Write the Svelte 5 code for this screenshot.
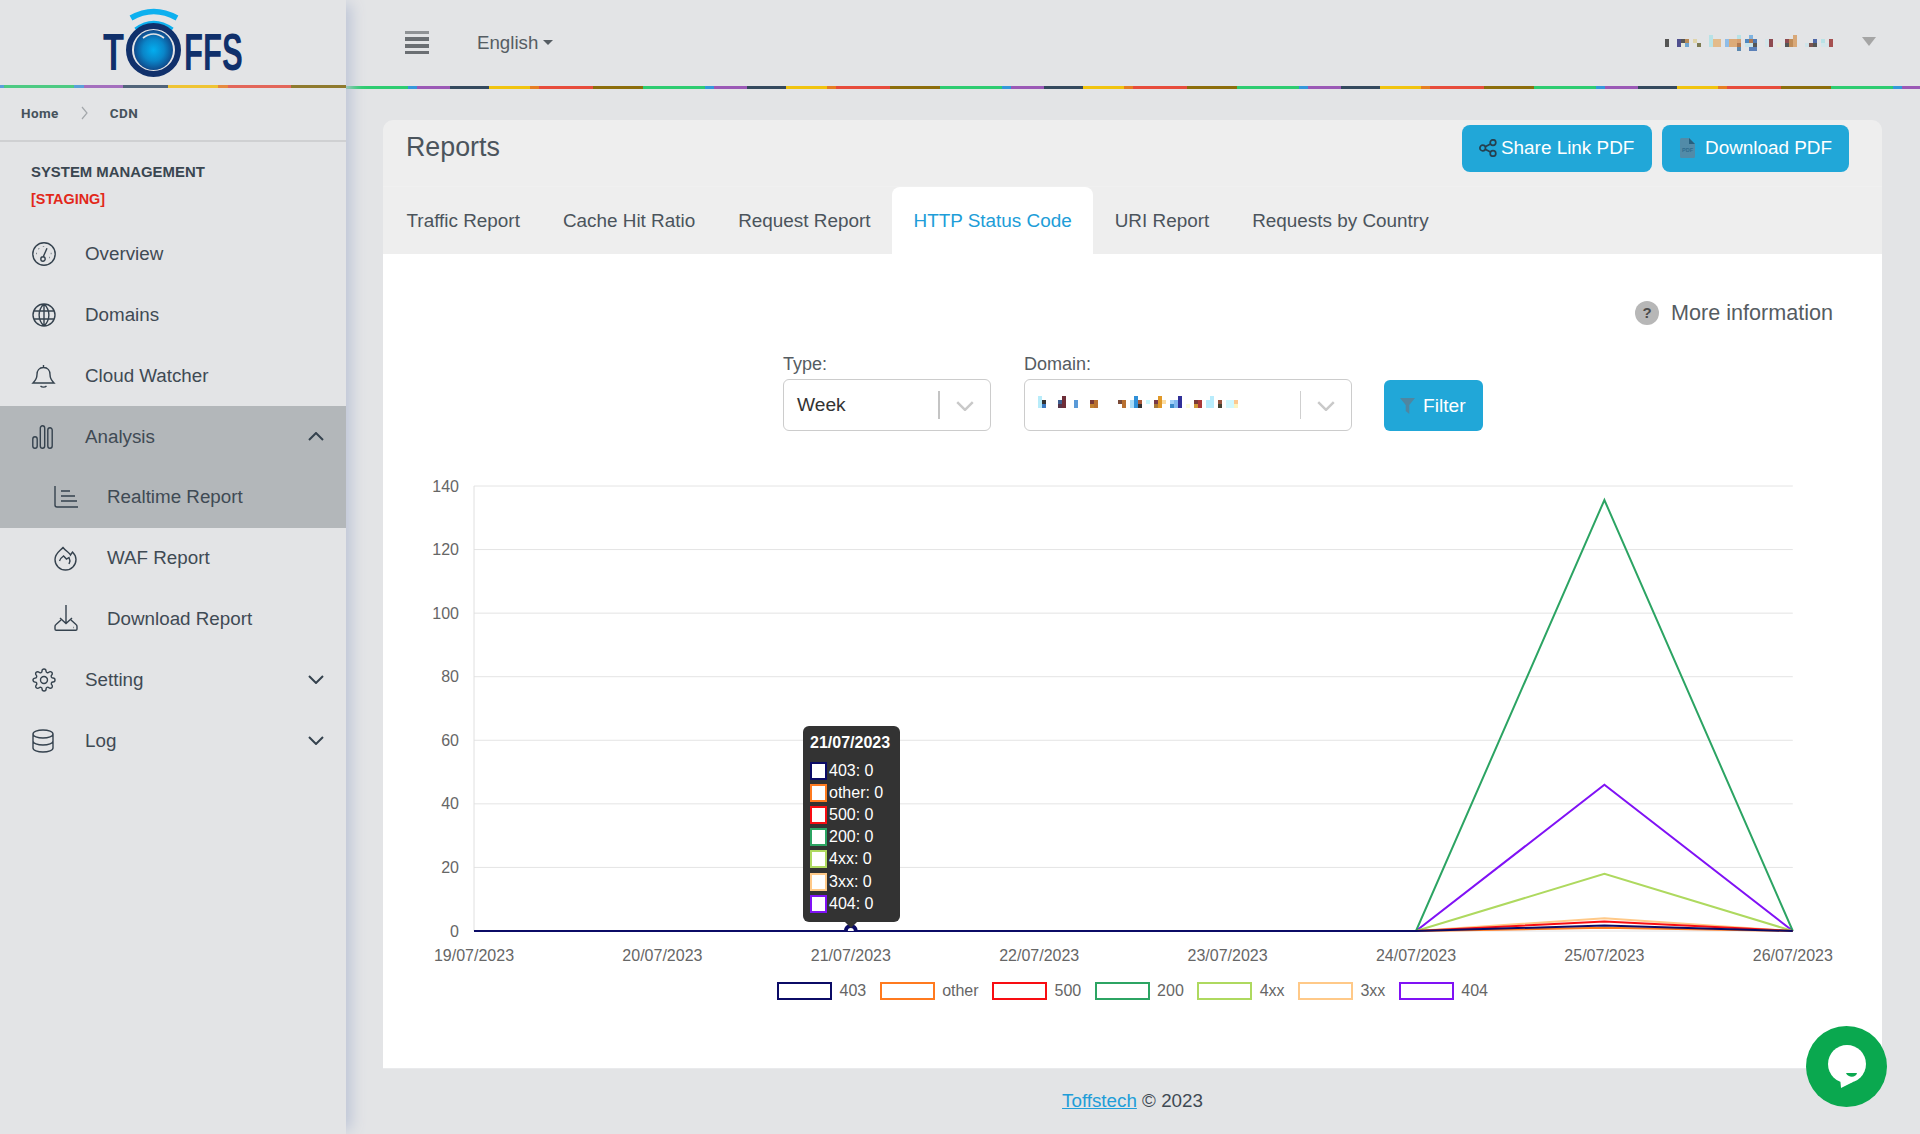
<script>
	const icons = {
		overview:
			'M12 .8a11.2 11.2 0 1 0 0 22.4 11.2 11.2 0 0 0 0-22.4z M11 15.3 15 6.3 M13.2 17a2.2 2.2 0 1 1-4.4 0 2.2 2.2 0 0 1 4.4 0z M11.5 4.4v.6 M6.6 6.6l.4.4 M4.3 11.5h.6 M18.8 11.5h.6 M17.2 15.5h.5',
		domains:
			'M12 1a11 11 0 1 0 0 22 11 11 0 0 0 0-22z M12 1c-6.5 6-6.5 16 0 22 M12 1c6.5 6 6.5 16 0 22 M12 1v22 M2 8h20 M2 16h20',
		bell: 'M11.5 1v2.5 M11.5 3.5c-4.5 0-6.5 3.5-6.5 7 0 4.5-2 6.5-4 8.5h21c-2-2-4-4-4-8.5 0-3.5-2-7-6.5-7z M8.5 22c1.5 1.5 4.5 1.5 6 0',
		analysis:
			'M.8 14a2.2 2.2 0 0 1 4.4 0v7a2.2 2.2 0 0 1-4.4 0z M8.3 3a2.2 2.2 0 0 1 4.4 0v18a2.2 2.2 0 0 1-4.4 0z M15.8 5a2.2 2.2 0 0 1 4.4 0v16a2.2 2.2 0 0 1-4.4 0z',
		realtime: 'M1 1v19a2 2 0 0 0 2 2h21 M7 6h9 M7 11h14 M7 16h16',
		waf: 'M9 1.5C6 5 1 7.5 1 13.5a10.5 10.5 0 0 0 21 0c0-3-1.5-5.5-3.5-7.5l-2 3C15.5 6.500 12 5.500 9 1.5z M5.5 15c1-2.5 2.5-4 4-5l3 3 2.5-1.5 1 3.5-1 3',
		download:
			'M12 -2v18 M6 11l6 5.5 6-5.5 M7 13l-5 4.5c-.8.6-1 1.2-1 2v2.5a1.2 1.2 0 0 0 1.2 1.2h19.6a1.2 1.2 0 0 0 1.2-1.2v-2.5c0-.8-.2-1.4-1-2L17 13 M19 20.5h.5',
		setting:
			'M19.4 15a1.65 1.65 0 0 0 .33 1.82l.06.06a2 2 0 0 1 0 2.83 2 2 0 0 1-2.83 0l-.06-.06a1.65 1.65 0 0 0-1.82-.33 1.65 1.65 0 0 0-1 1.51V21a2 2 0 0 1-2 2 2 2 0 0 1-2-2v-.09A1.65 1.65 0 0 0 9 19.4a1.65 1.65 0 0 0-1.82.33l-.06.06a2 2 0 0 1-2.83 0 2 2 0 0 1 0-2.83l.06-.06a1.65 1.65 0 0 0 .33-1.82 1.65 1.65 0 0 0-1.51-1H3a2 2 0 0 1-2-2 2 2 0 0 1 2-2h.09A1.65 1.65 0 0 0 4.6 9a1.65 1.65 0 0 0-.33-1.82l-.06-.06a2 2 0 0 1 0-2.83 2 2 0 0 1 2.83 0l.06.06a1.65 1.65 0 0 0 1.82.33H9a1.65 1.65 0 0 0 1-1.51V3a2 2 0 0 1 2-2 2 2 0 0 1 2 2v.09a1.65 1.65 0 0 0 1 1.51 1.65 1.65 0 0 0 1.82-.33l.06-.06a2 2 0 0 1 2.83 0 2 2 0 0 1 0 2.83l-.06.06a1.65 1.65 0 0 0-.33 1.82V9a1.65 1.65 0 0 0 1.51 1H21a2 2 0 0 1 2 2 2 2 0 0 1-2 2h-.09a1.65 1.65 0 0 0-1.51 1z M15.5 12a3.5 3.5 0 1 1-7 0 3.5 3.5 0 0 1 7 0z',
		log: 'M1 5c0-2.2 4.5-4 10-4s10 1.8 10 4-4.5 4-10 4S1 7.2 1 5z M1 5v14c0 2.2 4.5 4 10 4s10-1.8 10-4V5 M1 12c0 2.2 4.5 4 10 4s10-1.8 10-4'
	};

	const nav = [
		{ label: 'Overview', icon: 'overview' },
		{ label: 'Domains', icon: 'domains' },
		{ label: 'Cloud Watcher', icon: 'bell' },
		{ label: 'Analysis', icon: 'analysis', active: true, chevron: 'up' },
		{ label: 'Realtime Report', icon: 'realtime', active: true, sub: true },
		{ label: 'WAF Report', icon: 'waf', sub: true },
		{ label: 'Download Report', icon: 'download', sub: true },
		{ label: 'Setting', icon: 'setting', chevron: 'down' },
		{ label: 'Log', icon: 'log', chevron: 'down' }
	];

	const tabs = [
		'Traffic Report',
		'Cache Hit Ratio',
		'Request Report',
		'HTTP Status Code',
		'URI Report',
		'Requests by Country'
	];

	// blurred-out text, cells in 1/3 px
	const userCells = [
		[15, 33, 12, 24, '#555'], [51, 33, 12, 24, '#4f4f8f'], [63, 33, 12, 12, '#555'], [75, 33, 12, 12, '#b98b55'],
		[75, 45, 12, 12, '#6fa5d0'], [63, 45, 12, 12, '#e8e8d8'], [99, 33, 12, 12, '#e0d4a8'], [111, 45, 12, 12, '#7d7a52'],
		[147, 21, 12, 36, '#b8e2e6'], [159, 33, 24, 24, '#e3bb8b'], [195, 33, 12, 24, '#8fbde8'], [207, 33, 24, 24, '#dcab78'],
		[231, 21, 12, 12, '#b8e2e6'], [231, 33, 12, 12, '#d8a070'], [231, 45, 12, 12, '#b07a50'], [231, 57, 12, 12, '#5b88b0'],
		[267, 21, 12, 12, '#7fb3e0'], [255, 33, 12, 12, '#4f88c0'], [267, 33, 12, 12, '#b07850'], [279, 33, 12, 12, '#4f78b0'],
		[255, 45, 24, 12, '#c8e4ec'], [279, 45, 12, 12, '#555'], [267, 57, 24, 12, '#5b80b8'], [315, 33, 12, 24, '#d4e6ea'],
		[327, 33, 12, 24, '#8e4a50'], [351, 45, 12, 12, '#e8e8d8'], [375, 33, 12, 12, '#8e4a50'], [375, 45, 12, 12, '#555'],
		[387, 33, 12, 24, '#c08c58'], [399, 21, 12, 36, '#d8a878'], [435, 45, 12, 12, '#cfe4ea'], [447, 45, 12, 12, '#7d5550'],
		[459, 33, 12, 12, '#4f68a8'], [459, 45, 12, 12, '#555'], [483, 33, 12, 12, '#b8e2e6'], [483, 45, 24, 12, '#d4e6ea'],
		[507, 33, 12, 24, '#a65050']
	];

	const domainCells = [
		[24, 18, 12, 36, '#b8ecfa'], [36, 30, 12, 12, '#333'], [36, 42, 12, 12, '#3a78c0'], [84, 30, 12, 12, '#3f5f90'],
		[84, 42, 12, 12, '#55344a'], [96, 18, 12, 36, '#6e2e38'], [132, 30, 12, 24, '#5a9ad8'], [180, 30, 12, 12, '#7a3a38'],
		[180, 42, 12, 12, '#c08030'], [192, 30, 12, 24, '#b87030'], [264, 30, 12, 12, '#7a4a38'], [276, 30, 12, 24, '#b87030'],
		[300, 30, 12, 24, '#a8dcf8'], [312, 18, 12, 36, '#3090d8'], [324, 30, 12, 12, '#a85838'], [324, 42, 12, 12, '#333'],
		[348, 30, 12, 12, '#c8f8ff'], [372, 30, 12, 12, '#7a3a48'], [372, 42, 12, 12, '#a87838'], [384, 18, 12, 36, '#e09828'],
		[396, 30, 12, 12, '#fcdca0'], [420, 30, 12, 12, '#a0d0f8'], [420, 42, 12, 12, '#3888c8'], [432, 30, 12, 24, '#80b8f0'],
		[444, 18, 12, 36, '#303098'], [468, 42, 12, 12, '#fcfcd8'], [492, 30, 12, 12, '#7a3a38'], [492, 42, 12, 12, '#d09838'],
		[504, 30, 12, 24, '#a83838'], [528, 30, 12, 24, '#b8ecfc'], [540, 18, 12, 36, '#b8ecfc'], [564, 30, 12, 12, '#955540'],
		[564, 42, 12, 12, '#443'], [588, 30, 24, 24, '#d0f8ff'], [612, 30, 12, 12, '#fcc890'], [612, 42, 12, 12, '#fcf4c0']
	];

	const dates = ['19/07/2023', '20/07/2023', '21/07/2023', '22/07/2023', '23/07/2023', '24/07/2023', '25/07/2023', '26/07/2023'];
	const yTicks = [0, 20, 40, 60, 80, 100, 120, 140];
	const series = [
		{ name: '403', color: '#0b0b66', peak: 1.7 },
		{ name: 'other', color: '#ff7a1f', peak: 1 },
		{ name: '500', color: '#f80d12', peak: 3 },
		{ name: '200', color: '#2ca463', peak: 135.6 },
		{ name: '4xx', color: '#aed95f', peak: 18 },
		{ name: '3xx', color: '#ffc988', peak: 4 },
		{ name: '404', color: '#8012f5', peak: 46 }
	];

	const x0 = 474;
	const xStep = 188.4;
	const xAt = (i) => x0 + i * xStep;
	const yAt = (v) => 931 - v * (445 / 140);
	const linePoints = (s) =>
		dates.map((_, i) => `${xAt(i)},${yAt(i === 6 ? s.peak : 0)}`).join(' ');
	const drawOrder = [...series].reverse();
</script>

{#snippet pixels(cells)}
	<svg class="pixels" viewBox="0 0 660 90" shape-rendering="crispEdges">
		{#each cells as c}
			<rect x={c[0]} y={c[1]} width={c[2]} height={c[3]} fill={c[4]} />
		{/each}
	</svg>
{/snippet}

<div class="page">
	<aside class="sidebar">
		<div class="logo-box">
			<svg class="logo" viewBox="80 0 190 85">
				<defs>
					<radialGradient id="lens" cx="50%" cy="50%" r="50%">
						<stop offset="0%" stop-color="#03aeef" />
						<stop offset="55%" stop-color="#0a86c9" />
						<stop offset="100%" stop-color="#0f4a8c" />
					</radialGradient>
				</defs>
				<text transform="translate(103 70) scale(0.66 1)" class="logo-text">T</text>
				<text transform="translate(184 70) scale(0.6 1)" class="logo-text">FFS</text>
				<path d="M131 18 Q153.5 5 177 18" fill="none" stroke="#0db0ef" stroke-width="5.5" />
				<path d="M136 30 Q153.5 17 172 30" fill="none" stroke="#0db0ef" stroke-width="5.5" />
				<ellipse cx="153.5" cy="50" rx="24.5" ry="24" fill="#e3e4e6" stroke="#10306b" stroke-width="6" />
				<ellipse cx="153.5" cy="50" rx="19.5" ry="20" fill="url(#lens)" />
				<path d="M143 38 Q153.5 30 164 38" fill="none" stroke="#e3e4e6" stroke-width="1.6" />
			</svg>
		</div>
		<div class="rainbow-side"></div>

		<nav class="breadcrumb">
			<span>Home</span>
			<svg width="7" height="14" viewBox="0 0 7 14"><path d="M1 1l5 6-5 6" fill="none" stroke="#a3a7ab" stroke-width="1.2" /></svg>
			<span>CDN</span>
		</nav>

		<div class="heading">
			<div class="system">SYSTEM MANAGEMENT</div>
			<div class="staging">[STAGING]</div>
		</div>

		<ul class="menu">
			{#each nav as item}
				<li class:active={item.active} class:sub={item.sub}>
					<svg class="icon" viewBox="0 0 24 24"><path d={icons[item.icon]} /></svg>
					<span class="label">{item.label}</span>
					{#if item.chevron}
						<svg class="chevron" viewBox="0 0 16 9">
							<path d={item.chevron === 'up' ? 'M1 8l7-7 7 7' : 'M1 1l7 7 7-7'} />
						</svg>
					{/if}
				</li>
			{/each}
		</ul>
	</aside>

	<div class="right">
		<header class="topbar">
			<div class="burger"><i></i><i></i><i></i><i></i></div>
			<div class="lang">English<b class="caret"></b></div>
			<div class="user">
				{@render pixels(userCells)}
			</div>
		</header>
		<div class="rainbow"></div>

		<main class="content">
			<section class="card">
				<div class="card-top">
					<h1>Reports</h1>
					<div class="actions">
						<button class="btn share">
							<svg width="18" height="18" viewBox="0 0 18 18" fill="none" stroke="#26404f" stroke-width="1.7">
								<circle cx="3.7" cy="9" r="2.8" /><circle cx="14" cy="3.6" r="2.8" /><circle cx="14" cy="14.4" r="2.8" />
								<path d="M6.2 7.7l5.3-2.8M6.2 10.3l5.3 2.8" />
							</svg>
							Share Link PDF
						</button>
						<button class="btn download">
							<svg width="15" height="20" viewBox="0 0 15 20">
								<path d="M0 1.5A1.5 1.5 0 0 1 1.5 0H9l6 6v12.5a1.5 1.5 0 0 1-1.5 1.5h-12A1.5 1.5 0 0 1 0 18.500z" fill="#528ba8" />
								<path d="M9 0l6 6H9z" fill="#26607f" />
								<text x="7.500" y="14" class="pdf-mark">PDF</text>
							</svg>
							Download PDF
						</button>
					</div>
				</div>
				<div class="tabs">
					{#each tabs as tab, i}
						<div class="tab" class:current={i === 3}>{tab}</div>
					{/each}
				</div>

				<div class="card-body">
					<div class="more">
						<span class="help">?</span>
						<span>More information</span>
					</div>

					<div class="filters">
						<div class="field type">
							<span class="field-label">Type:</span>
							<div class="select">
								<span class="value">Week</span>
								<i class="sep dark"></i>
								<svg class="arrow" viewBox="0 0 16 9"><path d="M1 1l7 7 7-7" /></svg>
							</div>
						</div>
						<div class="field domain">
							<span class="field-label">Domain:</span>
							<div class="select">
								<div class="value blurred">{@render pixels(domainCells)}</div>
								<i class="sep"></i>
								<svg class="arrow" viewBox="0 0 16 9"><path d="M1 1l7 7 7-7" /></svg>
							</div>
						</div>
						<button class="btn filter">
							<svg width="15" height="16" viewBox="0 0 15 16"><path d="M0 0h15L9.300 7v9L5.700 13V7z" fill="#4f86a1" /></svg>
							Filter
						</button>
					</div>

					<div class="chart">
						<svg class="plot" viewBox="383 470 1499 505">
							<defs>
								<clipPath id="above-axis"><rect x="830" y="915" width="42" height="16" /></clipPath>
							</defs>
							{#each yTicks as t}
								<line x1={x0} x2={xAt(7)} y1={yAt(t)} y2={yAt(t)} stroke="#e4e4e4" stroke-width="1" />
								<text x="459" y={yAt(t) + 5.500} text-anchor="end" class="tick">{t}</text>
							{/each}
							<line x1={x0} x2={x0} y1={yAt(140)} y2={yAt(0)} stroke="#e0e0e0" stroke-width="1" />
							{#each dates as d, i}
								<text x={xAt(i)} y="961" text-anchor="middle" class="tick">{d}</text>
							{/each}
							{#each drawOrder as s}
								<polyline points={linePoints(s)} fill="none" stroke={s.color} stroke-width="2" />
							{/each}
							<circle cx={xAt(2)} cy="931" r="5" fill="#fff" stroke="#0b0b66" stroke-width="4" clip-path="url(#above-axis)" />
						</svg>

						<div class="tooltip">
							<div class="tip-title">{dates[2]}</div>
							{#each series as s}
								<div class="tip-row">
									<i class="swatch" style="border-color:{s.color}"></i>{s.name}: 0
								</div>
							{/each}
						</div>
					</div>

					<div class="legend">
						{#each series as s}
							<div class="legend-item">
								<i class="legend-box" style="border-color:{s.color}"></i>{s.name}
							</div>
						{/each}
					</div>
				</div>
			</section>

			<footer class="foot"><a href="#top">Toffstech</a> © 2023</footer>
		</main>
	</div>

	<div class="chat">
		<svg width="44" height="44" viewBox="0 0 44 44">
			<circle cx="22" cy="19" r="19" fill="#fff" />
			<path d="M15 32l1 11 12-6z" fill="#fff" />
			<path d="M21 28h11c-1 5-9 5-11 0z" fill="#0aa84f" />
		</svg>
	</div>
</div>

<style>
	:global(body) {
		margin: 0;
		background: #e3e4e6;
		font-family: 'Liberation Sans', Arial, sans-serif;
		color: #3f4a54;
	}

	.page {
		display: flex;
		min-height: 1134px;
	}

	/* sidebar */
	.sidebar {
		width: 346px;
		flex: none;
		background: #e3e4e6;
		position: relative;
		z-index: 2;
		box-shadow: 9px 0 14px -4px #bcc4d6;
		clip-path: inset(0 -40px 0 0);
	}
	.logo-box {
		height: 85px;
	}
	.logo {
		display: block;
		width: 190px;
		height: 85px;
		margin-left: 80px;
	}
	.logo-text {
		font-family: 'Liberation Sans', sans-serif;
		font-size: 52px;
		font-weight: 700;
		fill: #10306b;
	}
	.rainbow-side {
		height: 3px;
		background: linear-gradient(
			to right,
			#5aa0d9 0 4px,
			#4dca83 4px 74px,
			#5aa0d9 74px 84px,
			#a46fbe 84px 123px,
			#51647a 123px 168px,
			#efc434 168px 218px,
			#e68a3f 218px 228px,
			#e3665a 228px 291px,
			#8f7a2e 291px 346px
		);
	}
	.breadcrumb {
		box-sizing: border-box;
		height: 54px;
		padding: 0 0 3px 21px;
		display: flex;
		align-items: center;
		gap: 22px;
		font-size: 13.500px;
		letter-spacing: 0.4px;
		font-weight: 700;
		font-family: Roboto, 'Liberation Sans', sans-serif;
		color: #46525c;
		border-bottom: 2px solid #cfd0d2;
	}
	.heading {
		padding: 20px 0 0 31px;
		height: 60px;
		font-weight: 700;
	}
	.system {
		font-size: 14.900px;
		line-height: 20px;
		color: #3a4650;
	}
	.staging {
		font-size: 14.400px;
		line-height: 20px;
		margin-top: 7px;
		color: #e2281a;
	}
	.menu {
		list-style: none;
		margin: 1.600px 0 0;
		padding: 0;
	}
	.menu li {
		height: 60.850px;
		display: flex;
		align-items: center;
		padding-left: 32px;
		font-size: 18.800px;
		color: #3f4a54;
	}
	.menu li.sub {
		padding-left: 54px;
	}
	.menu li.active {
		background: #b3b7ba;
	}
	.icon {
		width: 24px;
		height: 24px;
		flex: none;
		margin-right: 29px;
		fill: none;
		stroke: #35424e;
		stroke-width: 1.400;
		overflow: visible;
	}
	.chevron {
		width: 16px;
		height: 9px;
		margin-left: auto;
		margin-right: 22px;
		fill: none;
		stroke: #35424e;
		stroke-width: 2;
	}

	/* top bar */
	.right {
		flex: 1;
		min-width: 0;
		display: flex;
		flex-direction: column;
	}
	.topbar {
		height: 86px;
		display: flex;
		align-items: center;
		padding-left: 59px;
	}
	.burger {
		width: 24px;
		display: flex;
		flex-direction: column;
		gap: 3.200px;
		margin-top: -1px;
	}
	.burger i {
		height: 3.600px;
		background: #6b6f73;
	}
	.burger i:first-child {
		background: #8f9295;
	}
	.lang {
		margin-left: 48px;
		font-size: 18.700px;
		color: #565d63;
		display: flex;
		align-items: center;
		margin-top: -1px;
	}
	.caret {
		margin-left: 5px;
		border-top: 5px solid #565d63;
		border-left: 5px solid transparent;
		border-right: 5px solid transparent;
	}
	.user {
		margin-left: auto;
		margin-right: 40px;
		display: flex;
		align-items: center;
		margin-top: -1px;
		position: relative;
	}
	.user::after {
		content: '';
		position: absolute;
		left: 202px;
		top: 9px;
		border-top: 9px solid #a5a5a5;
		border-left: 7.500px solid transparent;
		border-right: 7.500px solid transparent;
	}
	.pixels {
		display: block;
		width: 220px;
		height: 30px;
	}
	.rainbow {
		height: 3px;
		background: repeating-linear-gradient(
			to right,
			#2ecc71 0 62px,
			#3498db 62px 71px,
			#9b59b6 71px 104px,
			#34495e 104px 143px,
			#f1c40f 143px 184px,
			#e67e22 184px 193px,
			#e74c3c 193px 247px,
			#8d6e0c 247px 297px
		);
	}

	/* card */
	.content {
		padding: 31px 38px 0 37px;
	}
	.card {
		border-radius: 10px 10px 0 0;
		background: #eee;
		box-shadow: 0 1px 0 #e9eaec;
	}
	.card-top {
		height: 67px;
		display: flex;
		justify-content: space-between;
		padding: 0 33px 0 23px;
		border-bottom: 1px solid #f0f0f0;
		box-sizing: border-box;
	}
	h1 {
		margin: 0;
		font-size: 26.800px;
		font-weight: 400;
		line-height: 55px;
		color: #4b545c;
	}
	.actions {
		display: flex;
		gap: 10px;
		padding-top: 5px;
	}
	.btn {
		border: 0;
		background: #21a7d8;
		color: #fff;
		font: inherit;
		font-size: 18.900px;
		border-radius: 8px;
		height: 47px;
		display: flex;
		align-items: center;
		padding: 0;
	}
	.share {
		width: 190px;
		padding-left: 17px;
		gap: 4px;
		padding-bottom: 2px;
	}
	.download {
		width: 187px;
		padding-left: 18px;
		gap: 10px;
		padding-bottom: 2px;
	}
	.pdf-mark {
		font-family: 'Liberation Sans', sans-serif;
		font-size: 5.500px;
		font-weight: 700;
		fill: #2f6b8d;
		text-anchor: middle;
	}
	.tabs {
		height: 67px;
		display: flex;
		padding-left: 2px;
	}
	.tab {
		padding: 0 21.500px;
		line-height: 67px;
		font-size: 18.900px;
		color: #4b545c;
	}
	.tab.current {
		background: #fff;
		color: #209dd8;
		border-radius: 8px 8px 0 0;
	}
	.card-body {
		background: #fff;
		padding-bottom: 68px;
	}
	.more {
		padding: 45px 49px 0 0;
		height: 28px;
		display: flex;
		justify-content: flex-end;
		align-items: center;
		gap: 12px;
		font-size: 21.600px;
		color: #555c62;
	}
	.help {
		width: 24px;
		height: 24px;
		border-radius: 50%;
		background: #b7b7b7;
		color: #4a4a4a;
		font-size: 15px;
		font-weight: 700;
		text-align: center;
		line-height: 24px;
	}
	.filters {
		margin: 26px 0 0 400px;
		display: flex;
		align-items: flex-end;
	}
	.field {
		display: flex;
		flex-direction: column;
	}
	.field-label {
		font-size: 18px;
		line-height: 22px;
		margin-bottom: 4px;
		color: #555c62;
	}
	.select {
		box-sizing: border-box;
		height: 52px;
		border: 1px solid #cccccc;
		border-radius: 6px;
		display: flex;
		align-items: center;
		background: #fff;
	}
	.type .select {
		width: 208px;
	}
	.domain {
		margin-left: 33px;
	}
	.domain .select {
		width: 328px;
	}
	.value {
		font-size: 19.200px;
		padding-left: 13px;
		flex: 1;
		color: #333;
		min-width: 0;
	}
	.blurred {
		padding-left: 0;
		margin-left: 5px;
		height: 30px;
		overflow: hidden;
	}
	.sep {
		width: 1px;
		height: 28px;
		background: #cfcfcf;
	}
	.sep.dark {
		background: #c4c4c4;
		width: 2px;
	}
	.arrow {
		width: 18px;
		height: 10px;
		margin: 2px 16px 0 16px;
		fill: none;
		stroke: #c9c9c9;
		stroke-width: 2.200;
	}
	.filter {
		width: 99px;
		height: 51px;
		margin-left: 32px;
		border-radius: 6px;
		padding-left: 16px;
		gap: 8px;
		font-size: 19.200px;
	}

	/* chart */
	.chart {
		position: relative;
		margin-top: 39px;
		height: 505px;
	}
	.plot {
		display: block;
		width: 1499px;
		height: 505px;
	}
	.tick {
		font-family: 'Liberation Sans', sans-serif;
		font-size: 16px;
		fill: #666;
	}
	.tooltip {
		position: absolute;
		left: 420px;
		top: 256px;
		width: 97px;
		height: 196px;
		box-sizing: border-box;
		background: #333;
		border-radius: 6px;
		padding: 7px 0 0 7px;
		color: #fff;
		font-size: 16px;
	}
	.tooltip::after {
		content: '';
		position: absolute;
		left: 42px;
		bottom: -6px;
		border-top: 6px solid #333;
		border-left: 6px solid transparent;
		border-right: 6px solid transparent;
	}
	.tip-title {
		font-weight: 700;
		line-height: 20px;
		margin-bottom: 7px;
		white-space: nowrap;
	}
	.tip-row {
		height: 22.100px;
		line-height: 22px;
		display: flex;
		align-items: center;
		gap: 2px;
		white-space: nowrap;
	}
	.swatch {
		width: 17px;
		height: 18px;
		box-sizing: border-box;
		border: 2px solid;
		background: #fff;
	}
	.legend {
		margin-top: 7px;
		display: flex;
		justify-content: center;
		gap: 13.400px;
		height: 18px;
		font-size: 16px;
		color: #666;
	}
	.legend-item {
		display: flex;
		align-items: center;
		gap: 7.500px;
	}
	.legend-box {
		width: 55px;
		height: 18px;
		box-sizing: border-box;
		border: 2px solid;
	}

	.foot {
		height: 66px;
		line-height: 66px;
		text-align: center;
		font-size: 18.800px;
		color: #3f4a54;
	}
	.foot a {
		color: #209dd8;
	}

	.chat {
		position: fixed;
		right: 33px;
		bottom: 27px;
		width: 81px;
		height: 81px;
		border-radius: 50%;
		background: #0aa84f;
		display: flex;
		align-items: center;
		justify-content: center;
		z-index: 5;
	}
</style>
